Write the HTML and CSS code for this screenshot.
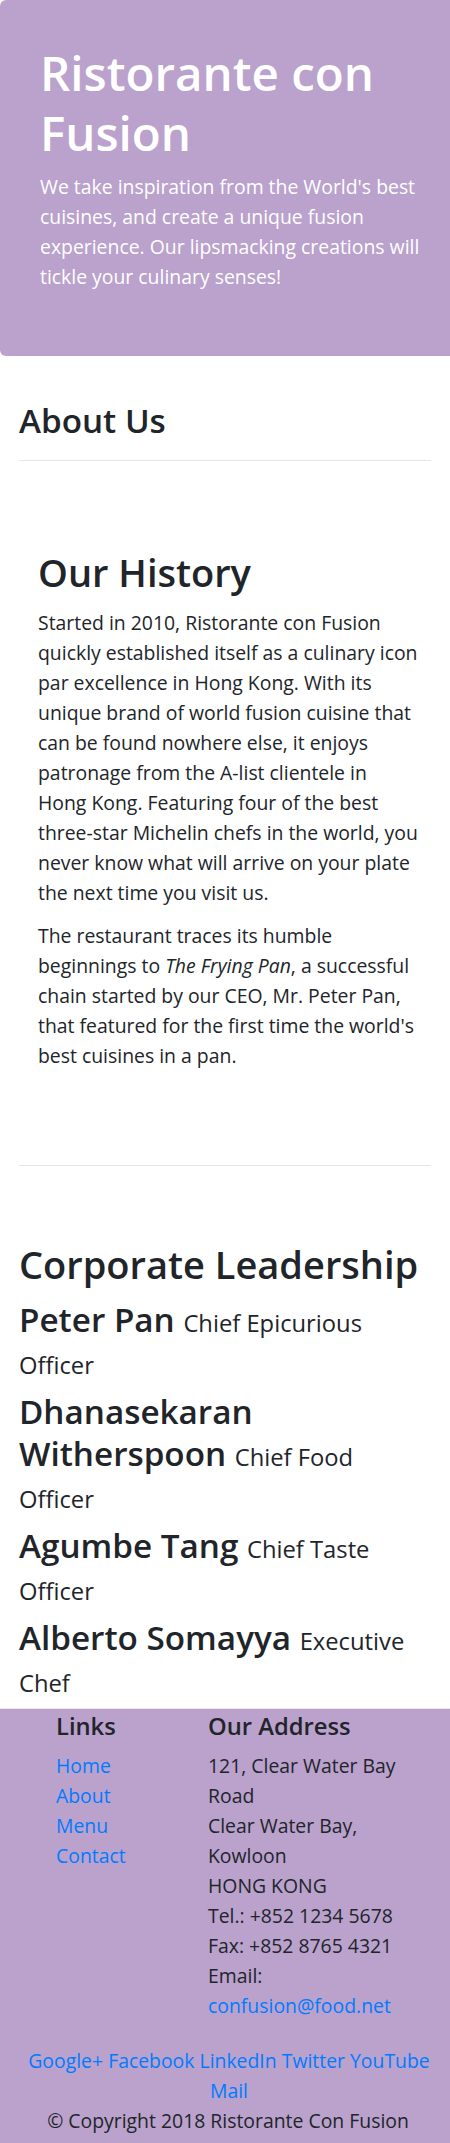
FILE: index.html
```html
<!DOCTYPE html>
<html lang="en">
<head>
<meta charset="utf-8">
<title>Ristorante con Fusion: About Us</title>
<link rel="stylesheet" href="styles.css">
</head>
<body>
<header class="jumbotron">
  <div class="jumbo-text">
    <h1>Ristorante con Fusion</h1>
    <p>We take inspiration from the World's best cuisines, and create a unique fusion experience. Our lipsmacking creations will tickle your culinary senses!</p>
  </div>
</header>

<main class="container">
  <section class="page-head">
    <h3 class="page-title">About Us</h3>
    <hr class="rule">
  </section>

  <section class="history">
    <h2 class="section-title">Our History</h2>
    <p class="history-p1">Started in 2010, Ristorante con Fusion quickly established itself as a culinary icon par excellence in Hong Kong. With its unique brand of world fusion cuisine that can be found nowhere else, it enjoys patronage from the A-list clientele in Hong Kong. Featuring four of the best three-star Michelin chefs in the world, you never know what will arrive on your plate the next time you visit us.</p>
    <p>The restaurant traces its humble beginnings to <em>The Frying Pan</em>, a successful chain started by our CEO, Mr. Peter Pan, that featured for the first time the world's best cuisines in a pan.</p>
  </section>

  <hr class="rule rule-2">

  <section class="leaders">
    <h2 class="section-title">Corporate Leadership</h2>
    <h3 class="leader">Peter Pan <small>Chief Epicurious Officer</small></h3>
    <h3 class="leader">Dhanasekaran Witherspoon <small>Chief Food Officer</small></h3>
    <h3 class="leader">Agumbe Tang <small>Chief Taste Officer</small></h3>
    <h3 class="leader">Alberto Somayya <small>Executive Chef</small></h3>
  </section>
</main>

<footer class="footer">
  <div class="footer-row">
    <div class="footer-col">
      <h5>Links</h5>
      <ul class="link-list">
        <li><a href="#">Home</a></li>
        <li><a href="#">About</a></li>
        <li><a href="#">Menu</a></li>
        <li><a href="#">Contact</a></li>
      </ul>
    </div>
    <div class="footer-col address-col">
      <h5>Our Address</h5>
      <address>
        121, Clear Water Bay Road<br>
        Clear Water Bay, Kowloon<br>
        HONG KONG<br>
        Tel.: +852 1234 5678<br>
        Fax: +852 8765 4321<br>
        Email: <a href="#">confusion@food.net</a>
      </address>
    </div>
  </div>
  <div class="social">
    <a href="#">Google+</a> <a href="#">Facebook</a> <a href="#">LinkedIn</a> <a href="#">Twitter</a> <a href="#">YouTube</a> <a href="#">Mail</a>
  </div>
  <p class="copyright">© Copyright 2018 Ristorante Con Fusion</p>
</footer>
</body>
</html>
```
FILE: styles.css
```css
* {
  box-sizing: border-box;
}

body {
  margin: 0;
  font-family: "Open Sans", "Liberation Sans", sans-serif;
  font-size: 19.4px;
  line-height: 30px;
  color: #212529;
  background: #fff;
}

h1, h2, h3, h5 {
  margin: 0;
  font-weight: 600;
}

p {
  margin: 0;
}

a {
  color: #007bff;
  text-decoration: none;
}

/* Jumbotron */
.jumbotron {
  background: #baa2cd;
  color: #fff;
  padding: 43px 25px 64px 40px;
  border-radius: 6px 0 0 6px;
}

.jumbotron h1 {
  font-size: 47.5px;
  line-height: 60px;
  margin-bottom: 9px;
}

/* Main */
.container {
  padding: 0 19px;
}

.page-title {
  font-size: 33.25px;
  line-height: 42px;
  margin-top: 43px;
}

.rule {
  border: 0;
  border-top: 1px solid rgba(0, 0, 0, 0.1);
  height: 0;
  margin: 19px 0 0;
}

.history {
  padding: 0 13px 0 19px;
  margin-top: 87px;
}

.section-title {
  font-size: 38px;
  line-height: 48px;
  margin-bottom: 10px;
}

.history .section-title {
  margin-bottom: 12px;
}

.history-p1 {
  margin-bottom: 13px;
}

.rule-2 {
  margin-top: 94px;
}

.leaders {
  margin-top: 74px;
}

.leader {
  font-size: 33.25px;
  line-height: 42px;
  margin-bottom: 8px;
}

.leader small {
  font-size: 23.75px;
  font-weight: 400;
  line-height: 30px;
}

/* Footer */
.footer {
  background: #baa2cd;
  border-top: 1px solid #e6e6e6;
  padding: 2px 0 20px;
}

.footer-row {
  display: grid;
  grid-template-columns: 152px 210px;
  padding-left: 56px;
}

.footer h5 {
  font-size: 23.75px;
  line-height: 30px;
  margin-bottom: 10px;
}

.link-list {
  list-style: none;
  margin: 0;
  padding: 0;
}

address {
  font-style: normal;
  margin-bottom: 25px;
}

.social {
  text-align: center;
  padding: 0 13px 0 21px;
}

.copyright {
  text-align: center;
  padding: 0 0 0 6px;
}
```
